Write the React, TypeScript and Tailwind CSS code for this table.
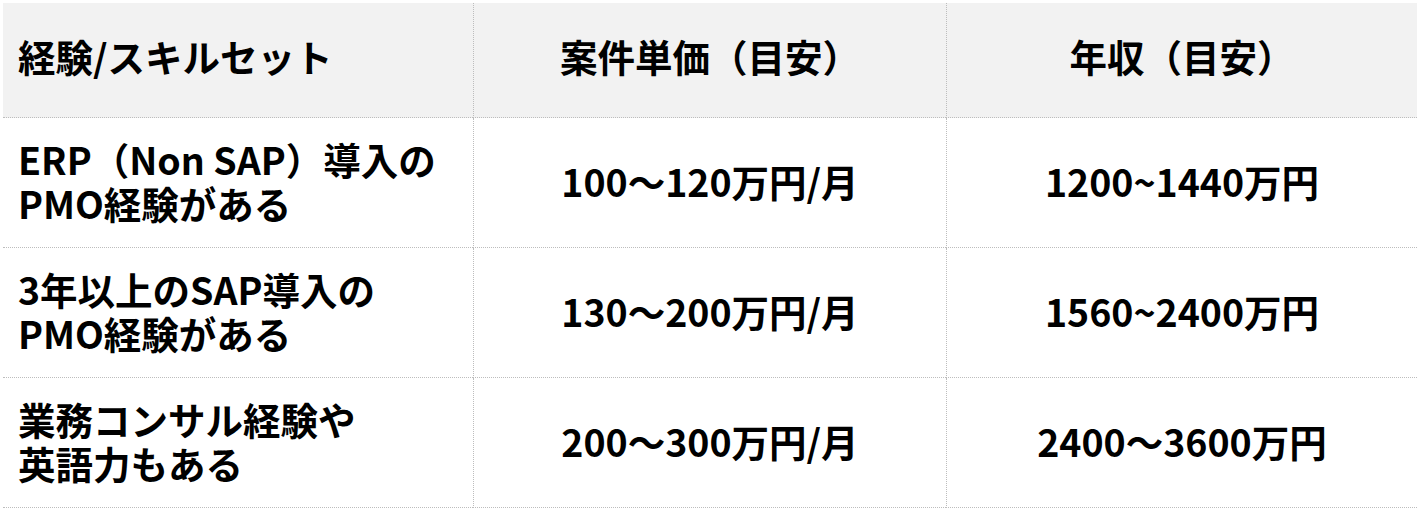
import React from 'react';

const rows = [
  { skill: ['ERP（Non SAP）導入の', 'PMO経験がある'], price: '100～120万円/月', salary: '1200~1440万円' },
  { skill: ['3年以上のSAP導入の', 'PMO経験がある'], price: '130～200万円/月', salary: '1560~2400万円' },
  { skill: ['業務コンサル経験や', '英語力もある'], price: '200～300万円/月', salary: '2400～3600万円' },
];

export default function App() {
  return (
    <div
      className="w-[1421px] h-[512px] bg-white pt-[3px] pl-[3px] pr-[4px] text-black font-bold"
      style={{ fontFamily: '"Noto Sans CJK JP", "Noto Sans", sans-serif' }}
    >
      <div className="grid grid-cols-[470px_473px_1fr] text-[37.5px] leading-[44px]">
        {/* Header */}
        <div className="h-[115px] pb-[8px] bg-[#f2f2f2] border-b border-dotted border-[#bdbdbd] flex items-center pl-[15px]">
          経験/スキルセット
        </div>
        <div className="h-[115px] pb-[8px] bg-[#f2f2f2] border-b border-l border-dotted border-[#bdbdbd] flex items-center justify-center">
          案件単価（目安）
        </div>
        <div className="h-[115px] pb-[8px] bg-[#f2f2f2] border-b border-l border-dotted border-[#bdbdbd] flex items-center justify-center">
          年収（目安）
        </div>

        {rows.map((r) => (
          <React.Fragment key={r.price}>
            <div className="h-[130px] pb-[3px] border-b border-dotted border-[#bdbdbd] flex flex-col justify-center pl-[15px]">
              <span>{r.skill[0]}</span>
              <span>{r.skill[1]}</span>
            </div>
            <div className="h-[130px] pb-[3px] border-b border-l border-dotted border-[#bdbdbd] flex items-center justify-center">
              {r.price}
            </div>
            <div className="h-[130px] pb-[3px] border-b border-l border-dotted border-[#bdbdbd] flex items-center justify-center">
              {r.salary}
            </div>
          </React.Fragment>
        ))}
      </div>
    </div>
  );
}
